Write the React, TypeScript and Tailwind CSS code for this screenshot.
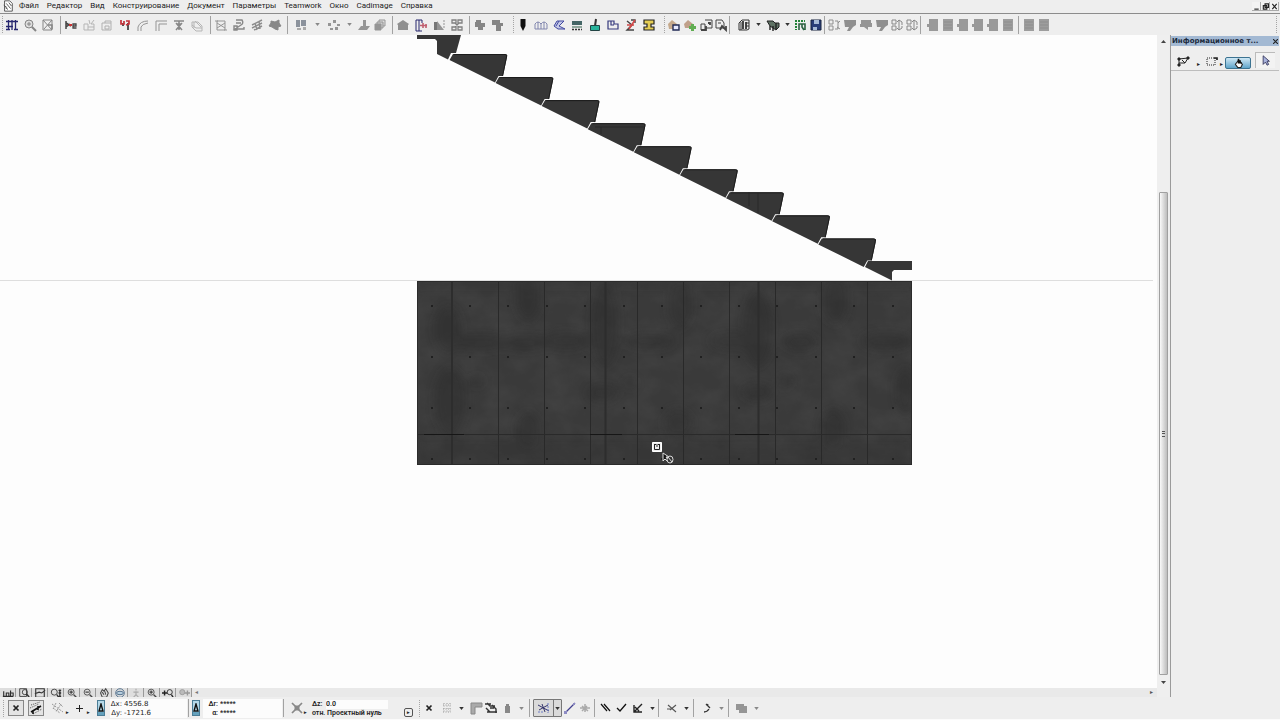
import type { ReactNode } from 'react';

const G = '#959595';
const D = '#2c2c2c';
const N = '#26266e';

const menu = ['Файл', 'Редактор', 'Вид', 'Конструирование', 'Документ', 'Параметры', 'Teamwork', 'Окно', 'Cadimage', 'Справка'];

// All glyphs are drawn on a 14x14 grid
const glyphs: Record<string, ReactNode> = {
  grid: <path d="M3.500 2v10M10.500 2v10M7 2v10M1 3.500h12M1 8.500h7M1 11.500h4M9 11.500h4" stroke={N} strokeWidth="1.300" />,
  zoom: <g stroke="#858585"><circle cx="6" cy="6" r="4" fill="#ddd" /><path d="M9 9l4 4" strokeWidth="2" /><path d="M4 6h4M6 4v4" /></g>,
  resize: <g stroke="#858585"><path d="M2 2h9v10H2zM2 2l9 10M11 2L3 11" /><path d="M7 7h4v4" strokeWidth="1.500" /></g>,
  cut: <g><path d="M2 3v8M2 9l4-3M2 5l5 3" stroke="#444" strokeWidth="1.500" /><path d="M5 7h3" stroke="#c33" strokeWidth="2" /><path d="M12.500 10H9V6h3v2H9" stroke="#444" strokeWidth="1.300" /></g>,
  split: <path d="M2 6h4v6H2zM6 9h6v3H6M7 2l1 4M12 2L9 6h3v3" stroke="#b5b5b5" />,
  boxes: <path d="M2 5h9v7H2zM5 5V3h6v2M5 8h4v3H5z" stroke="#b0b0b0" />,
  flag: <g><path d="M5 5v3M10 5v7" stroke="#222" strokeWidth="1.500" /><path d="M3 2v4h3V3M8 3h3v3L8 7" stroke="#c33038" strokeWidth="1.700" /></g>,
  arc: <path d="M2 13V9Q4 3 12 3M5 13V9Q6 6 12 5" stroke={G} />,
  corner: <path d="M2 13V3h11M5 13V6h8" stroke={G} />,
  join: <path d="M2 3h10M7 3v9M4 5l6 7M10 5l-6 7M5 6h4" stroke="#888" strokeWidth="1.500" />,
  stack: <g stroke="#b5b5b5"><path d="M2 4h6l4 4v5H6L2 9zM2 7l4 3h6M5 3l6 6M4 4v6" /></g>,
  frame: <g stroke={G}><path d="M3 3h8v9H3z" /><path d="M3 5l8 5M3 10l8-5M1 3h3M10 12h3" /></g>,
  undo: <path d="M4 2h6q2 3-1 5L3 11h9V9M4 5h5M2 8h3v4H2z" stroke="#888" strokeWidth="1.400" />,
  hatch: <path d="M2 7L12 2M2 10L12 5M4 12l8-4M5 5l2 7M9 3l1 8" stroke="#8d8d8d" strokeWidth="1.400" />,
  star: <path d="M3 3l4 1 4-2v3l2 3-3 1v3l-3-1-3-2-3-1 2-3z" fill="#888" stroke="#888" />,
  tiles: <g fill="#8b929c"><path d="M2 2h4v7H2zM7 2h5v6H7z" /><path d="M3 10h4v2H3zM9 9h3v3H9z" fill="#aaa" /></g>,
  blocks: <path d="M1 5h3v3H1zM6 2h3v3H6zM10 6h3v2h-3zM3 10h3v2H3zM8 9h3v3H8z" fill={G} />,
  raise: <path d="M6 2h3v6h4l-3 4H1l3-4h2z" fill={G} />,
  sheets: <g stroke={G}><path d="M6 2h6v6H6z" fill="#ddd" /><path d="M4 4h6v6H4z" fill="#ccc" /><path d="M2 6h6v6H2z" fill={G} /></g>,
  house: <path d="M1 6l6-4 6 4-1 1v5H2V7z" fill="#8f8f8f" />,
  section: <g><path d="M2 2v11M5 2v11M2 2h6M2 13h6M8 2v3" stroke={N} /><path d="M6 7.500h7M9 5v5M12 6v4" stroke="#c06070" strokeWidth="1.600" /></g>,
  tri: <g><path d="M2 4h4v8H2z" fill="#777" /><path d="M5 3l7 9H5z" fill={G} /><path d="M12 2v8" stroke={G} strokeDasharray="2 1" /></g>,
  corners: <path d="M2 2h4v3H2zM8 2h4v3H8zM2 9h4v3H2zM8 9h4v3H8zM5 5l4 4M9 5L5 9" stroke="#808080" strokeWidth="1.300" />,
  blob: <path d="M3 2h5v3h4v4h-2v3H5V9H2V4h1z" fill="#858585" />,
  blob2: <path d="M1 2h8v3h3v3h-2v5H5V7H1z" fill="#858585" />,
  pen: <path d="M4.500 1h5v7L7 13 4.500 8z" fill="#111" />,
  arches: <path d="M1 11V6q3-4 6 0 3-4 6 0v5zM4 4v7M7 5v6M10 4v7" stroke="#8186ae" />,
  slab: <path d="M12 3H5L2 8l4 3h7L7 8zM7 3l-3 5" fill="#c4c8e6" stroke="#4148a0" />,
  layers: <g><path d="M2 3h10v4H2z" fill="#446666" /><path d="M2 8h10v2H2z" fill="#8fa79c" /><path d="M2 11.500h10" stroke="#333" strokeDasharray="2 1" strokeWidth="1.500" /></g>,
  brush: <g><path d="M8 1L7 8" stroke="#333" strokeWidth="2" /><path d="M2.500 7.500h9v5h-9z" fill="#28b39b" stroke="#244" /></g>,
  door: <path d="M2 3h6v3h4v5H2zM5 3v4h3" stroke="#35397d" strokeWidth="1.200" />,
  pencil: <g><path d="M3 3l5 4-5 5h7M7 2h4v3" stroke="#444" strokeWidth="1.400" /><path d="M11 2L5 11M3 7h7" stroke="#d04848" strokeWidth="1.600" /></g>,
  beam: <path d="M2 2h10v4H9v3h3v3H2V9h3V6H2z" fill="#e5ce55" stroke="#222" strokeWidth="1.200" />,
  homeSave: <g><path d="M1 6l4-4 5 4-2 5H2z" fill="#c5a98c" /><path d="M6 7h6v5H6z" fill="#e7eaff" stroke="#222b55" strokeWidth="1.400" /></g>,
  homeAdd: <g><path d="M1 6l4-4 5 4-2 4H2z" fill="#c0a08a" /><path d="M6 9.500h7M9.500 6v7" stroke="#61ae52" strokeWidth="3" /></g>,
  pages: <g stroke="#444"><path d="M2 6h4v6H2zM6 2h7v8H7" /><path d="M9 5h2v2M2 12h5V8" strokeWidth="1.800" /></g>,
  pages2: <g stroke="#444"><path d="M2 2h6l2 3v5H2zM4 5h3" /><path d="M6 12l2-4 2 2 2 2V8" strokeWidth="1.800" /></g>,
  book: <g stroke="#333"><path d="M2 5l3-3h7v9l-2 1H2zM4 4v8" /><path d="M6 3v8M9 4v7" strokeWidth="1.800" /><path d="M9 5h3M9 8h3" /></g>,
  camera: <g><path d="M1 3h6l2 2h4v4l-3 3-6-4z" fill="#5f7264" stroke="#222" /><path d="M4 8v4M7 8v5M10 5v6" stroke="#222" strokeWidth="1.400" /></g>,
  chart: <g><path d="M2 2v10M4 3h7" stroke="#238338" strokeWidth="2" strokeDasharray="2 1" /><path d="M5 12V6h3v3l2 3M8 6h3v6" stroke="#2c6242" strokeWidth="1.600" /></g>,
  save: <g><path d="M2 2h10v10H2z" fill="#283d78" stroke="#17233f" /><path d="M5 2h5v4H5zM4 9h4v3H4z" fill="#a7bad6" /></g>,
  list: <path d="M2 2h4v4H2zM2 8h4v4H2zM8 3h3v8H8M11 5l2-2M10 9l3 2" stroke="#8e8e8e" />,
  callout: <path d="M1 2h12v5l-3 2-3 4H4l2-4H2z" fill="#8f8f8f" />,
  callout2: <path d="M2 2h10v3h1v4H9v3L5 9H1V6h1z" fill={G} />,
  updown: <path d="M2 2h4v4H2zM2 8h4v4H2zM9 2v10M7 4l2-2 3 2v3M7 10l2 2 3-2V8" stroke="#888" />,
  square: <path d="M3 1h9v12H3V9H1V6h2z" fill="#999" />,
  square2: <g><path d="M2 1h10v12H2z" fill="#9d9d9d" /><path d="M3 4h8M3 7h8M3 10h8" stroke="#8d8d8d" /></g>,
  close: <path d="M4.500 4.500l5 5M9.500 4.500l-5 5" stroke="#222" strokeWidth="1.700" />,
  sketch: <g stroke="#555"><path d="M2 4l9-3M1 7l9-4M4 13l9-5" strokeDasharray="1 1" /><path d="M2 11l5-3 5-3M4 9v4M9 5v4" stroke="#111" strokeWidth="1.600" /></g>,
  sketchOff: <path d="M1 3l11 8M2 7l7 5M5 2l-3 6M10 3L5 11M8 2l4 4" stroke="#999" strokeDasharray="2 1" />,
  plus: <path d="M7.500 4v7M4 7.500h7" stroke="#222" />,
  cross: <g stroke="#888"><path d="M2 2l10 10M12 2L2 12" strokeWidth="1.700" /><path d="M5 5h4v4H5z" fill="#888" /></g>,
  dots: <path d="M4 2v10M7 2v10M10 2v10M3 4h8M3 8h8M3 11h8" stroke="#999" strokeDasharray="1 1.500" />,
  bracket: <path d="M2 2h11v4H6v7H2z" fill="#aaa" stroke="#888" />,
  stairs: <path d="M1 3h6M3 2l3 3h5M2 7l4 4h7M3 11h4M8 4l4 4v4M6 7h4" stroke="#333" strokeWidth="1.400" />,
  lock: <path d="M4 5h5v7H4zM5 5V3h3v3" fill="#888" />,
  snap: <g><path d="M1 4l11 6M2 9l9-5M5 3l3 8" stroke="#34346c" /><path d="M11 2v10M1 11h5" stroke="#6c7cc7" strokeDasharray="2 1" /></g>,
  line: <g><path d="M2 12L12 2" stroke="#44418f" strokeWidth="1.300" /><path d="M1 10h3v3H1zM10 2h2v2h-2z" fill="#8d8bc4" /></g>,
  cluster: <path d="M7 3v8M2 7h10M4 5l6 5M9 5l-5 5" stroke="#aaa" strokeWidth="1.500" />,
  parallel: <path d="M3 3l6 7M6 3l6 7" stroke="#111" strokeWidth="1.200" />,
  perp: <path d="M3 7l3 3 6-7" stroke="#111" strokeWidth="1.300" />,
  angle: <path d="M3 4v7h8M3 11l8-8M4 6l4 4" stroke="#222" strokeWidth="1.400" />,
  bisect: <path d="M3 4l8 7M5 9l6-5M2 8h5" stroke="#555" strokeWidth="1.100" />,
  curve: <path d="M6 3l4 4M9 8q-2 3-5 3M7 5l1-2" stroke="#333" strokeWidth="1.300" />,
  fill: <path d="M1 3h8v2h3v7H4V9H1z" fill={G} />,
  overview: <path d="M1 11h12M2 11V5M5 11V7h3v4M10 11V4M10 7h3v4" stroke={D} strokeWidth="1.300" />,
  pageZoom: <g stroke="#333"><path d="M2 2h8v9H2z" /><circle cx="8" cy="6" r="3" /><path d="M10 8l3 4" strokeWidth="1.800" /></g>,
  graph: <path d="M2 2h10v10H2zM1 8l5-2 3 1 4-3" stroke="#333" strokeWidth="1.300" />,
  zoomPair: <g stroke="#333"><circle cx="5" cy="6" r="3.500" /><path d="M8 9l2 3M11.500 3v8M10 4h3M10 11h3M10 7h3" strokeWidth="1.500" /></g>,
  zoomIn: <g stroke="#444"><circle cx="6" cy="6" r="3.500" /><path d="M4 6h4M6 4v4M9 9l3 3" strokeWidth="1.600" /></g>,
  zoomOut: <g stroke="#444"><circle cx="6" cy="6" r="3.500" /><path d="M4 6h4M9 9l3 3" strokeWidth="1.600" /></g>,
  hand: <path d="M3 7l2-4 2 2 2-3 3 5-2 5H5zM5 6l2 3M8 5l1 4" stroke="#444" strokeWidth="1.200" />,
  orbit: <g stroke="#446583"><circle cx="7" cy="7" r="5" /><ellipse cx="7" cy="7" rx="4" ry="2" fill="#b8cfdf" /></g>,
  walk: <path d="M7 2v2M4 6h6M7 5v4l-3 3M7 9l3 3" stroke="#aaa" strokeWidth="1.300" />,
  back: <g stroke="#222"><path d="M0 7h6M3 4v6" strokeWidth="1.700" /><circle cx="9" cy="6" r="3" /><path d="M11 9l2 3" strokeWidth="1.600" /></g>,
  forward: <g stroke="#999"><circle cx="5" cy="6" r="3" fill="#bbb" /><path d="M8 7h6M11 4v6" strokeWidth="1.600" /></g>,
  pointer: <path d="M4 1v11l3-3 2 4 2-1-2-4h3z" fill="#a9b3dd" stroke="#25254d" />,
  polyline: <g stroke="#222"><path d="M2 5l9-1M2 5v6M2 9h6l3-5M5 6l3 3" /><path d="M1 4h2v2H1zM10 3h2v2h-2zM1 10h2v2H1z" fill="#222" /></g>,
  marquee: <g stroke="#222"><path d="M2 4h8v7H2z" strokeDasharray="1 1" /><path d="M9 4h3v2" strokeWidth="1.700" /></g>,
  bucket: <g><path d="M3 8l4-5 5 5-2 4H6z" fill="#fff" stroke="#222" strokeWidth="1.300" /><path d="M7 1v6M9 3v3h2" stroke="#111" strokeWidth="2" /></g>,
  doc: <g stroke="#444"><path d="M3 1h6l3 3v9H3z" fill="#fff" /><path d="M5 4l5 6M4 9l3 2M8 3l3 4M2 6l4 3" /></g>,
};

function Glyph({ name, className = 'h-[14px] w-[14px]' }: { name: string; className?: string }) {
  return (
    <svg viewBox="0 0 14 14" fill="none" className={`${className} shrink-0`} aria-hidden="true">
      {glyphs[name]}
    </svg>
  );
}

function Tool({ name, width = 'w-[18px]', className = '' }: { name: string; width?: string; className?: string }) {
  return (
    <button type="button" aria-label={name} className={`flex h-4 shrink-0 items-center justify-center ${width} ${className}`}>
      <Glyph name={name} />
    </button>
  );
}

function Tools({ names, width }: { names: string[]; width?: string }) {
  return (
    <div className="flex">
      {names.map((name, i) => <Tool key={i} name={name} width={width} />)}
    </div>
  );
}

function Drop({ width = 'w-[15px]', color = 'text-[#333]' }: { width?: string; color?: string }) {
  return (
    <button type="button" aria-label="more" className={`flex h-4 shrink-0 items-center justify-center ${width} ${color}`}>
      <svg viewBox="0 0 6 4" className="h-[3px] w-[5px]" fill="currentColor"><path d="M0 0h6L3 4z" /></svg>
    </button>
  );
}

function Sep({ className = 'ml-[3px] mr-px' }: { className?: string }) {
  return <div className={`h-[18px] w-px shrink-0 bg-[#a2a2a2] ${className}`} />;
}

function Grip({ className = '' }: { className?: string }) {
  return <div className={`h-[17px] shrink-0 border-l border-dotted border-[#a5a5a5] ${className}`} />;
}

function MenuBar() {
  return (
    <header className="flex h-[14px] shrink-0 items-start border-b border-[#8c8c8c] bg-[#eeeeee]">
      <Glyph name="doc" className="ml-[2px] h-3 w-3" />
      <nav className="ml-[5px] flex gap-2 font-[Roboto,sans-serif] text-[8px] leading-3 text-[#222]">
        {menu.map((item) => <button type="button" key={item}>{item}</button>)}
      </nav>
      <div className="ml-auto mr-px mt-[2px] flex h-[9px] items-stretch">
        {['M1 7h5', 'M3 1h4v4H3zM1 3h4v4H1z', 'M1 1l5 6M6 1L1 7'].map((d, i) => (
          <button type="button" key={d} aria-label={['Свернуть', 'Восстановить', 'Закрыть'][i]} className="flex w-[9px] items-center justify-center border-b border-r border-[#aaa] bg-[#f3f3f3]">
            <svg viewBox="0 0 7 8" className="h-[7px] w-[7px]" fill="none" stroke="#222" strokeWidth="1.300"><path d={d} /></svg>
          </button>
        ))}
      </div>
    </header>
  );
}

function TopToolbar() {
  return (
    <div className="flex h-[21px] shrink-0 items-center bg-[#eeeeee]">
      <Grip className="ml-[2px]" />
      <Tools names={['grid', 'zoom', 'resize']} />
      <Sep />
      <Tools names={['cut', 'split', 'boxes', 'flag', 'arc', 'corner', 'join', 'stack']} />
      <Sep className="ml-1 mr-px" />
      <Tools names={['frame', 'undo', 'hatch', 'star']} />
      <Sep className="ml-[3px] mr-1" />
      <Tool name="tiles" />
      <Drop color="text-[#888]" />
      <Tool name="blocks" width="w-[17px]" />
      <Drop color="text-[#888]" />
      <Tool name="raise" width="w-[14px]" />
      <Tool name="sheets" />
      <Sep />
      <Tools names={['house', 'section', 'tri', 'corners']} />
      <Sep />
      <Tools names={['blob', 'blob2']} />
      <Grip className="ml-[6px]" />
      <Tools names={['pen', 'arches', 'slab', 'layers', 'brush', 'door', 'pencil', 'beam']} />
      <Grip className="ml-[6px] mr-px" />
      <Tools names={['homeSave', 'homeAdd']} width="w-4" />
      <Tools names={['pages', 'pages2']} width="w-[15px]" />
      <Sep className="ml-px mr-[6px]" />
      <Tool name="book" width="w-4" />
      <Drop width="w-[13px]" />
      <Tool name="camera" width="w-4" />
      <Drop width="w-3" />
      <Tools names={['chart', 'save']} width="w-[15px]" />
      <Sep className="mx-px" />
      <Tools names={['list', 'callout', 'callout2']} width="w-4" />
      <Tools names={['callout', 'updown', 'updown']} width="w-[15px]" />
      <Sep className="ml-px mr-1" />
      <Tools names={['square', 'square2', 'square', 'square', 'square', 'square2']} width="w-[15px]" />
      <Sep className="ml-[3px] mr-[2px]" />
      <Tools names={['square2', 'square2']} width="w-[15px]" />
      <Grip className="ml-auto mr-[3px]" />
    </div>
  );
}

const steps = [0, 1, 2, 3, 4, 5, 6, 7, 8];
const joints = [499, 545, 591, 638, 684, 730, 776, 822, 868];
const anchors = [432, 470, 508, 547, 585, 624, 662, 701, 739, 777, 816, 854, 893];
const stains = [
  [448, 48, 14, 24], [450, 120, 16, 34], [480, 62, 30, 8], [528, 16, 13, 24], [528, 148, 12, 18], [525, 62, 24, 8],
  [566, 60, 22, 9], [605, 44, 14, 42], [603, 112, 16, 9], [650, 60, 26, 8], [680, 24, 12, 24], [678, 142, 15, 14],
  [735, 60, 26, 9], [758, 48, 15, 38], [757, 111, 16, 9], [800, 61, 18, 9], [835, 20, 13, 24], [833, 148, 12, 20],
  [886, 60, 26, 9], [905, 110, 9, 24], [477, 100, 7, 6], [630, 102, 7, 6], [785, 100, 8, 7],
];

function Drawing() {
  return (
    <svg className="block h-full w-full" aria-label="Лестница">
      <defs>
        <filter id="soft"><feGaussianBlur stdDeviation="5" /></filter>
        <filter id="mottle" x="0" y="0" width="100%" height="100%">
          <feTurbulence type="fractalNoise" baseFrequency="0.035 0.045" numOctaves="4" seed="7" />
          <feColorMatrix values="0 0 0 0 0.1  0 0 0 0 0.1  0 0 0 0 0.1  1 0 0 0 -0.32" />
        </filter>
        <clipPath id="wall"><rect x="417" y="246" width="495" height="184" /></clipPath>
      </defs>
      <path d="M0 245.500H1153" stroke="#dedede" />
      <g fill="#363636">
        <path d="M417 0H461L456 18H451L448 24.500 437 19V6L435 4H417z" />
        {steps.map((i) => (
          <path key={i} transform={`translate(${i * 46.1} ${i * 23.05})`} d="M449.500 25L453 19H505Q508 19 507 22L503 41H498.500L495 47.500z" />
        ))}
        <path d="M865 232L868 226H912V235H894L892 237V245.500z" />
      </g>
      <g fill="none" stroke="#1c1c1c" strokeWidth="1">
        {steps.map((i) => (
          <path key={i} transform={`translate(${i * 46.1} ${i * 23.05})`} d="M454 19.500H505Q507.500 19.500 506.500 22L502.500 41" />
        ))}
        <path d="M595 92H644M601 92v7M749 157v14M758 158v20" stroke="#282828" />
      </g>
      <g clipPath="url(#wall)">
        <rect x="417" y="246" width="495" height="184" fill="#3a3a3a" />
        <rect x="417" y="246" width="495" height="184" filter="url(#mottle)" opacity=".45" />
        <g transform="translate(0 246)">
          <g fill="#222" opacity=".3" filter="url(#soft)">
            {stains.map(([cx, cy, rx, ry], i) => <ellipse key={i} cx={cx} cy={cy} rx={rx} ry={ry} />)}
            <rect x="417" y="158" width="495" height="26" opacity=".5" />
            <rect x="417" y="0" width="495" height="7" opacity=".6" />
          </g>
          {joints.map((x) => <path key={x} d={`M${x - 0.5} 0V184`} stroke="#292929" />)}
          <path d="M452 0V184M605.500 0V184M758.500 0V184" stroke="#2d2d2d" strokeWidth="2" />
          <path d="M417 153.500H912" stroke="#2a2a2a" />
          <path d="M424 153.500h40M590 153.500h32M735 153.500h34" stroke="#161616" />
          {[25, 76, 127, 178].map((y) => anchors.map((x) => (
            <rect key={`${x}-${y}`} x={x - 1} y={y - 1} width="2" height="2" fill="#202020" />
          )))}
        </g>
      </g>
      <rect x="417.500" y="246.500" width="494" height="183" fill="none" stroke="#2b2b2b" />
      <g transform="translate(652 407)" fill="none" stroke="#222">
        <path d="M.5.5h9v9h-9z" fill="#eee" stroke="#fff" />
        <path d="M2.500 3v4.500h5V3M5 2v3M2 2.500h2M6 2.500h2" />
      </g>
      <g transform="translate(663 418)" stroke="#ddd">
        <path d="M0 0v8l2-2 2 2 1-1-2-3h3z" fill="#111" />
        <ellipse cx="7" cy="6.500" rx="3" ry="3.500" fill="#333" />
        <path d="M5 4l4 5" />
      </g>
    </svg>
  );
}

function ViewStrip() {
  const names = ['overview', 'pageZoom', 'graph', 'zoomPair', 'zoomIn', 'zoomOut', 'hand', 'orbit', 'walk', 'zoomIn', 'back', 'forward'];
  return (
    <div className="flex h-[9px] items-center bg-[#e9e9e9]">
      {names.map((name, i) => (
        <button type="button" key={i} aria-label={name} className="flex h-[9px] w-4 items-center justify-center border-r border-[#999] bg-[#dedede]">
          <Glyph name={name} className="h-3 w-[14px]" />
        </button>
      ))}
      <span className="ml-[3px] text-[6px] leading-[9px] text-[#777]">◂</span>
      <span className="ml-auto mr-1 text-[6px] leading-[9px] text-[#555]">▸</span>
    </div>
  );
}

function ScrollBar() {
  return (
    <div className="flex w-[12px] shrink-0 flex-col items-center bg-[#efefef] pb-[13px] pt-[5px]">
      <Arrow up />
      <div className="h-[149px]" />
      <div className="flex w-[9px] flex-1 items-center justify-center rounded-[1px] border border-[#a0a0a0] bg-linear-to-r from-[#fafafa] to-[#bdbdbd]">
        <div className="h-[6px] w-[3px] border-y border-[#555] py-px"><div className="h-px bg-[#555]" /></div>
      </div>
      <div className="h-[6px]" />
      <Arrow />
    </div>
  );
}

function Arrow({ up = false }: { up?: boolean }) {
  return (
    <svg viewBox="0 0 5 3" className="h-[3px] w-[5px]" fill="#444"><path d={up ? 'M0 3h5L2.500 0z' : 'M0 0h5L2.500 3z'} /></svg>
  );
}

function InfoPanel() {
  return (
    <aside className="ml-px mr-px w-[109px] shrink-0 border-l border-[#9a9a9a] bg-[#eeeeee] pt-px">
      <div className="flex h-[10px] items-center justify-between bg-[#a3b9d3] px-px font-['DejaVu_Sans',sans-serif] text-[7px] font-bold leading-[10px] text-[#1c2a3c]">
        <span className="whitespace-nowrap">Информационное т...</span>
        <button type="button" aria-label="Закрыть">
          <svg viewBox="0 0 6 6" className="h-[5px] w-[5px]" stroke="#222" strokeWidth="1.300"><path d="M0 0l6 6M6 0L0 6" /></svg>
        </button>
      </div>
      <div className="flex h-[25px] items-end border-b border-[#bdbdbd] pb-px pl-[5px]">
        <Tool name="polyline" width="w-4" />
        <span className="w-3 text-center text-[6px] text-[#222]">▸</span>
        <Tool name="marquee" width="w-4" />
        <span className="w-[5px] text-[6px] text-[#222]">▸</span>
        <button type="button" aria-label="bucket" className="flex h-3 w-[26px] items-center justify-center rounded-[2px] border border-[#3c7391] bg-linear-to-b from-[#cfe8f5] to-[#5fa5cb]">
          <Glyph name="bucket" className="h-[11px] w-[11px]" />
        </button>
        <button type="button" aria-label="pointer" className="mb-px ml-1 flex h-4 w-5 items-center justify-center border-l border-t border-[#bbb] bg-[#f3f3f3]">
          <Glyph name="pointer" className="h-[11px] w-[11px]" />
        </button>
      </div>
    </aside>
  );
}

function DeltaButton() {
  return (
    <button type="button" aria-label="delta" className="flex h-4 w-2 shrink-0 flex-col items-center justify-between border border-[#4b7d96] bg-[#b4d8e8]">
      <svg viewBox="0 0 6 9" className="mt-[2px] h-[9px] w-[6px]" fill="none" stroke="#111" strokeWidth="1.400"><path d="M3 1L1 8h4z" /></svg>
      <span className="h-[3px] w-full bg-[#64a1bd]" />
    </button>
  );
}

function Coord({ id, label, value, labelWidth = 'w-[14px]' }: { id: string; label: string; value: string; labelWidth?: string }) {
  return (
    <div className="flex h-[9px] items-center">
      <label htmlFor={id} className={`shrink-0 pr-[2px] text-right ${labelWidth}`}>{label}</label>
      <input id={id} defaultValue={value} className="h-[9px] w-full min-w-0 bg-transparent outline-none" />
    </div>
  );
}

function BottomBar() {
  return (
    <footer className="flex h-[23px] shrink-0 items-center border-b border-[#fbfbfb] bg-[#eeeeee] font-[Roboto,sans-serif] text-[7px] font-semibold leading-[9px] text-[#222]">
      <Grip className="ml-[3px]" />
      <Tool name="close" width="w-4" className="ml-1 border border-[#888] bg-[#e4e4e4]" />
      <Tool name="sketch" width="w-4" className="ml-1 border border-[#888] bg-[#e4e4e4]" />
      <Tool name="sketchOff" width="w-4" className="ml-[6px]" />
      <span className="mt-2 w-[5px] text-[5px]">▸</span>
      <Tool name="plus" width="w-4" />
      <span className="mt-2 w-[5px] text-[5px]">▸</span>
      <div className="ml-[5px]"><DeltaButton /></div>
      <div className="ml-[5px] w-[77px] bg-[#fcfcfc] pt-px font-['DejaVu_Sans',sans-serif] font-normal">
        <Coord id="dx" label="Δx:" value="4556.8" />
        <Coord id="dy" label="Δy:" value="-1721.6" />
      </div>
      <Sep className="ml-px mr-[3px]" />
      <DeltaButton />
      <div className="ml-[3px] w-[79px] bg-[#fcfcfc] pt-px">
        <Coord id="dr" label="Δr:" value="*****" labelWidth="w-[17px]" />
        <Coord id="da" label="α:" value="*****" labelWidth="w-[17px]" />
      </div>
      <Sep className="ml-px mr-[6px]" />
      <Tool name="cross" width="w-[14px]" />
      <span className="mt-2 w-[8px] text-[5px]">▸</span>
      <div className="w-[76px] pt-px">
        <div className="flex h-[9px]">
          <label htmlFor="dz" className="w-[14px] shrink-0">Δz:</label>
          <input id="dz" defaultValue="0.0" className="h-[9px] w-full min-w-0 bg-[#fcfcfc] outline-none" />
        </div>
        <div className="h-[9px] whitespace-nowrap">отн. Проектный нуль</div>
      </div>
      <button type="button" aria-label="Проектный нуль" className="ml-4 mt-[9px] flex h-[9px] w-[9px] items-center justify-center rounded-[2px] border border-[#555] text-[5px] leading-none">▸</button>
      <Grip className="ml-[6px]" />
      <Tool name="close" />
      <Tool name="dots" width="w-[17px]" />
      <Drop width="w-[13px]" />
      <Tools names={['bracket', 'stairs']} width="w-[15px]" />
      <Tool name="lock" width="w-[19px]" />
      <Drop width="w-[9px]" color="text-[#888]" />
      <Sep className="ml-[3px] mr-[3px]" />
      <div className="flex h-[18px] items-center rounded-[1px] border border-[#777] bg-[#dadada]">
        <Tool name="snap" width="w-[19px]" />
        <div className="h-full w-px bg-[#777]" />
        <Drop width="w-[7px]" />
      </div>
      <Tool name="line" width="w-[15px]" />
      <Tool name="cluster" width="w-4" />
      <Sep className="ml-px mr-[2px]" />
      <Tools names={['parallel', 'perp']} width="w-4" />
      <Tool name="angle" />
      <Drop width="w-[10px]" />
      <Sep className="ml-px mr-1" />
      <Tool name="bisect" />
      <Drop width="w-[11px]" />
      <Sep className="ml-px mr-[5px]" />
      <Tool name="curve" width="w-4" />
      <Drop width="w-3" color="text-[#888]" />
      <Sep className="ml-px mr-[5px]" />
      <Tool name="fill" width="w-4" />
      <Drop width="w-3" color="text-[#888]" />
    </footer>
  );
}

export default function App() {
  return (
    <div className="flex h-screen flex-col overflow-hidden bg-[#eeeeee] font-['Open_Sans',sans-serif]">
      <MenuBar />
      <TopToolbar />
      <div className="flex min-h-0 flex-1">
        <main className="flex min-w-0 flex-1 flex-col">
          <div className="min-h-0 flex-1 overflow-hidden bg-[#fdfdfd]"><Drawing /></div>
          <ViewStrip />
        </main>
        <ScrollBar />
        <InfoPanel />
      </div>
      <BottomBar />
    </div>
  );
}
